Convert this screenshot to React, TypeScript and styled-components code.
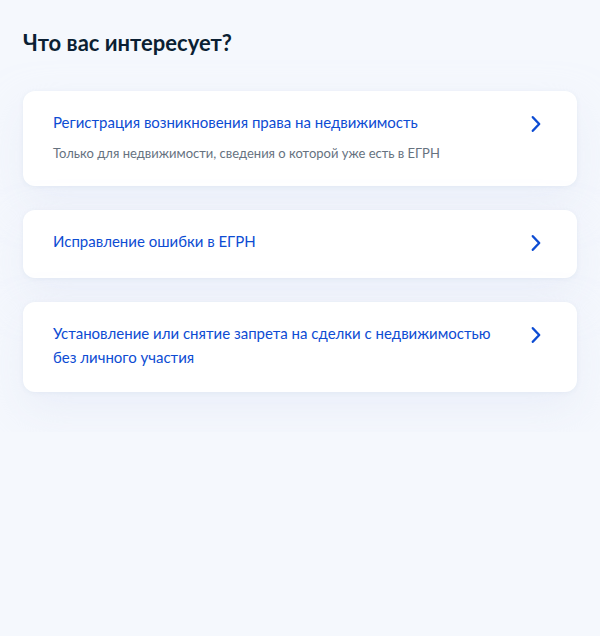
import React from 'react';
import styled, {createGlobalStyle} from 'styled-components';

const GlobalStyle = createGlobalStyle`
  html, body {
    margin: 0;
    padding: 0;
    background: #F5F8FD;
    font-family: Lato, "Noto Sans", "Liberation Sans", sans-serif;
    -webkit-font-smoothing: antialiased;
  }
`;

interface Service {
    title: string;
    hint?: string;
}

const services: Service[] = [
    {
        title: 'Регистрация возникновения права на недвижимость',
        hint: 'Только для недвижимости, сведения о которой уже есть в ЕГРН',
    },
    {title: 'Исправление ошибки в ЕГРН'},
    {title: 'Установление или снятие запрета на сделки с недвижимостью без личного участия'},
];

const Chevron: React.FC = () => (
    <Arrow viewBox="0 0 24 24" aria-hidden>
        <path d="M8.8 5.2L15.2 12L8.8 18.8" fill="none" stroke="#0D4CD3" strokeWidth="2.4" strokeLinecap="round" strokeLinejoin="round"/>
    </Arrow>
);

const App: React.FC = () => {
    return (
        <Page>
            <GlobalStyle/>
            <Title>Что вас интересует?</Title>
            <List>
                {services.map(item => (
                    <Card key={item.title}>
                        <Body>
                            <Link>{item.title}</Link>
                            {item.hint && <Hint>{item.hint}</Hint>}
                        </Body>
                        <Chevron/>
                    </Card>
                ))}
            </List>
        </Page>
    );
};

export default App;

const Page = styled.main`
  padding: 29px 23px 40px;
`;

const Title = styled.h2`
  margin: 0 0 34px;
  font-size: 22px;
  line-height: 28px;
  font-weight: 700;
  color: #0B1F33;
`;

const List = styled.div`
  display: flex;
  flex-direction: column;
  gap: 24px;
`;

const Card = styled.div`
  display: flex;
  align-items: flex-start;
  gap: 28px;
  background: #FFFFFF;
  border-radius: 12px;
  padding: 19px 29px 23px 30px;
  box-shadow: 0 1px 4px rgba(220, 228, 240, 0.6), 0 18px 40px rgba(225, 232, 245, 0.55);
  cursor: pointer;
`;

const Body = styled.div`
  flex: 1;
  display: flex;
  flex-direction: column;
`;

const Link = styled.div`
  font-size: 15px;
  line-height: 24px;
  color: #0D4CD3;
`;

const Hint = styled.div`
  margin-top: 9px;
  font-size: 13px;
  line-height: 20px;
  color: #66727F;
`;

const Arrow = styled.svg`
  flex: none;
  width: 24px;
  height: 24px;
  margin-top: 2px;
`;
